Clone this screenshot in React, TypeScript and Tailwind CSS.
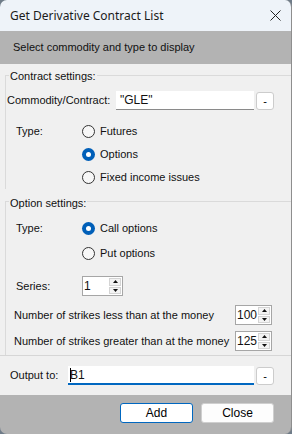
import React from 'react';

const font = { fontFamily: '"Liberation Sans", Arial, sans-serif' };

const Radio: React.FC<{ checked?: boolean; label: string; h: string }> = ({ checked, label, h }) => (
  <div className={`flex items-center ${h}`}>
    {checked ? (
      <span className="w-[13px] h-[13px] rounded-full bg-[#005fb8] flex items-center justify-center">
        <span className="w-[5px] h-[5px] rounded-full bg-white" />
      </span>
    ) : (
      <span className="w-[13px] h-[13px] rounded-full border border-[#333333] bg-[#f7f7f7]" />
    )}
    <span className="ml-[5px]">{label}</span>
  </div>
);

const Spinner: React.FC<{ value: string; w: string }> = ({ value, w }) => (
  <div className={`flex h-[20px] ${w} border border-[#a6a6a6] bg-white`}>
    <span className="flex-1 pl-[1px] text-[12px] leading-[18px]">{value}</span>
    <div className="flex flex-col w-[12px] my-[1px] mr-[1px] gap-px">
      <span className="flex-1 flex items-center justify-center bg-[#f3f3f3] border border-[#d4d4d4]">
        <svg width="5" height="3" viewBox="0 0 5 3"><path d="M0 3 L2.5 0 L5 3 Z" fill="#111" /></svg>
      </span>
      <span className="flex-1 flex items-center justify-center bg-[#f3f3f3] border border-[#d4d4d4]">
        <svg width="5" height="3" viewBox="0 0 5 3"><path d="M0 0 L5 0 L2.5 3 Z" fill="#111" /></svg>
      </span>
    </div>
  </div>
);

const DashButton: React.FC = () => (
  <button className="ml-[2px] w-[18px] h-[18px] rounded-[3px] border border-[#cccccc] bg-white text-[11px] leading-[14px] text-black">
    -
  </button>
);

const App: React.FC = () => {
  return (
    <div className="w-[292px] h-[434px] bg-[#6f7c89]" style={font}>
      <div className="w-full h-full flex flex-col rounded-[7px] overflow-hidden border-r border-[#8e8e8e] text-[11px] text-[#111]">
        {/* Title bar */}
        <div className="h-[31px] shrink-0 bg-[#eef3f9] flex items-center justify-between pl-[10px] pr-[9px]">
          <span className="text-[12px] text-[#1b1b1b]" style={{ fontFamily: '"Noto Sans", "Open Sans", sans-serif' }}>
            Get Derivative Contract List
          </span>
          <svg width="11" height="11" viewBox="0 0 11 11" className="mr-[1px]">
            <path d="M0.5 0.5 L10.5 10.5 M10.5 0.5 L0.5 10.5" stroke="#222" strokeWidth="1" />
          </svg>
        </div>

        {/* Header */}
        <div className="h-[33px] shrink-0 bg-[#b3b3b3] flex items-center pl-[13px]">
          Select commodity and type to display
        </div>

        {/* Body */}
        <div className="flex-1 bg-[#f0f0f0] flex flex-col">
          {/* Contract settings */}
          <div className="relative ml-[5px] mt-[11px] border-l border-t border-[#dadada] pt-[15px]">
            <span className="absolute -top-[7px] left-[3px] bg-[#f0f0f0] px-[1px] leading-[15px]">Contract settings:</span>
            <div className="flex items-center h-[19px] ml-[1px]">
              <span className="w-[109px]">Commodity/Contract:</span>
              <div className="w-[138px] h-[19px] bg-white border-b border-[#8a8a8a] flex items-center pl-[4px] text-[12px]">
                "GLE"
              </div>
              <DashButton />
            </div>
            <div className="flex mt-[10px]">
              <span className="w-[66px] ml-[10px] leading-[23px]">Type:</span>
              <div className="flex flex-col">
                <Radio label="Futures" h="h-[23px]" />
                <Radio checked label="Options" h="h-[23px]" />
                <Radio label="Fixed income issues" h="h-[23px]" />
              </div>
            </div>
          </div>

          {/* Option settings */}
          <div className="relative ml-[5px] mt-[12px] border-l border-t border-[#dadada] pt-[14px] pb-[4px]">
            <span className="absolute -top-[6px] left-[3px] bg-[#f0f0f0] px-[1px] leading-[15px]">Option settings:</span>
            <div className="flex">
              <span className="w-[66px] ml-[10px] leading-[25px]">Type:</span>
              <div className="flex flex-col">
                <Radio checked label="Call options" h="h-[25px]" />
                <Radio label="Put options" h="h-[25px]" />
              </div>
            </div>
            <div className="flex items-center mt-[10px] ml-[10px]">
              <span className="w-[66px]">Series:</span>
              <Spinner value="1" w="w-[41px]" />
            </div>
            <div className="flex items-center justify-between mt-[9px] ml-[8px] mr-[19px]">
              <span>Number of strikes less than at the money</span>
              <Spinner value="100" w="w-[37px]" />
            </div>
            <div className="flex items-center justify-between mt-[6px] ml-[8px] mr-[19px]">
              <span>Number of strikes greater than at the money</span>
              <Spinner value="125" w="w-[37px]" />
            </div>
          </div>

          <div className="h-px bg-[#d6d6d6]" />

          {/* Output */}
          <div className="flex items-center h-[19px] mt-[10px] ml-[10px]">
            <span className="w-[58px]">Output to:</span>
            <div className="w-[186px] h-[19px] bg-white border-b-2 border-[#0067c0] flex items-center pl-[2px] text-[12px]">
              <span className="w-px h-[14px] bg-black" />
              <span className="-ml-px">B1</span>
            </div>
            <DashButton />
          </div>
        </div>

        {/* Footer */}
        <div className="h-[39px] shrink-0 bg-[#b3b3b3] flex justify-end items-start pt-[8px] pr-[17px] gap-[8px]">
          <button className="w-[73px] h-[20px] rounded-[3px] border border-[#0067c0] bg-white text-[12px] text-black">Add</button>
          <button className="w-[73px] h-[20px] rounded-[3px] border border-[#cfcfcf] bg-[#fdfdfd] text-[12px] text-black">Close</button>
        </div>
      </div>
    </div>
  );
};

export default App;
